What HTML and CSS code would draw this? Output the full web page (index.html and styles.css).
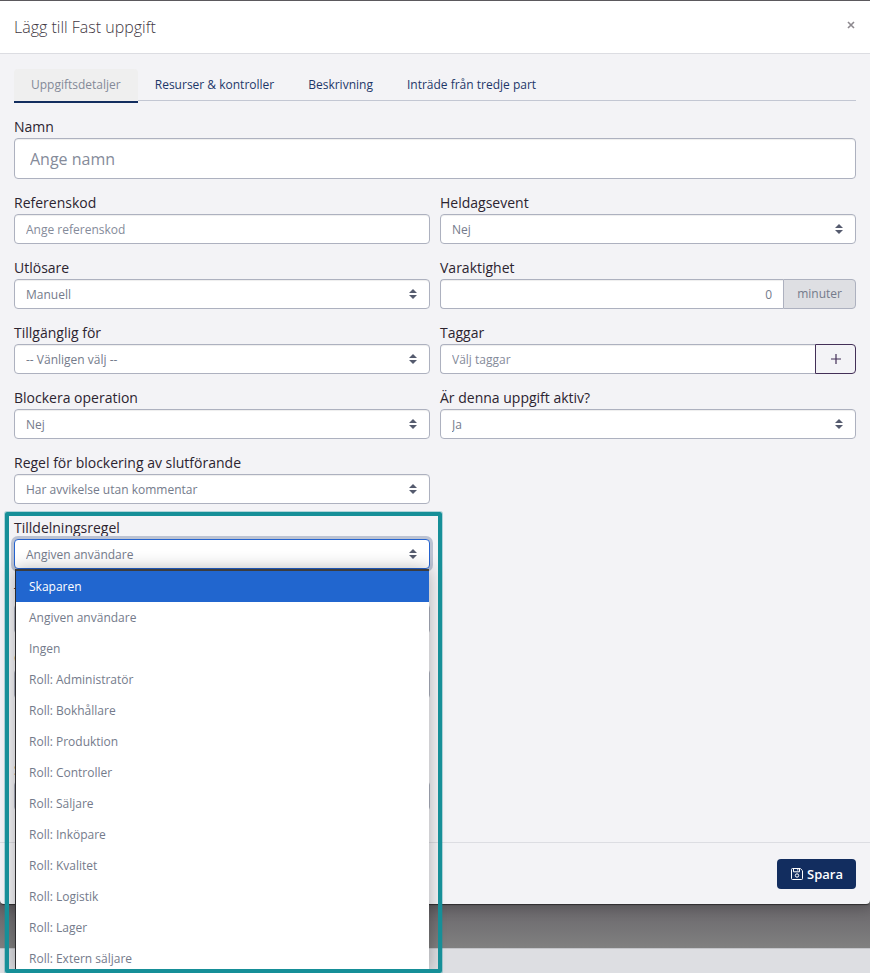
FILE: index.html
```html
<!DOCTYPE html>
<html lang="sv">
<head>
  <meta charset="UTF-8" />
  <meta name="viewport" content="width=device-width, initial-scale=1" />
  <title>Lägg till Fast uppgift</title>
  <link rel="stylesheet" href="styles.css">
</head>
<body>
  <form class="modal">
    <header class="modal-header">
      <h1>Lägg till Fast uppgift</h1>
      <button type="button" class="close" aria-label="Stäng">
        <svg width="8" height="8" viewBox="0 0 8 8"><path d="M1 1l6 6M7 1L1 7" stroke="currentColor" stroke-width="1.6"/></svg>
      </button>
    </header>

    <div class="modal-body">
      <nav class="tabs">
        <a class="tab active" href="#detaljer">Uppgiftsdetaljer</a>
        <a class="tab" href="#resurser">Resurser &amp; kontroller</a>
        <a class="tab" href="#beskrivning">Beskrivning</a>
        <a class="tab" href="#tredjepart">Inträde från tredje part</a>
      </nav>

      <div class="form-grid">
        <div class="field wide">
          <label for="namn">Namn</label>
          <input class="control large" type="text" id="namn" placeholder="Ange namn" />
        </div>

        <div class="field">
          <label for="referenskod">Referenskod</label>
          <input class="control" type="text" id="referenskod" placeholder="Ange referenskod" />
        </div>
        <div class="field">
          <label for="heldag">Heldagsevent</label>
          <select class="control" id="heldag"><option>Nej</option></select>
        </div>

        <div class="field">
          <label for="utlosare">Utlösare</label>
          <select class="control" id="utlosare"><option>Manuell</option></select>
        </div>
        <div class="field">
          <label for="varaktighet">Varaktighet</label>
          <div class="group">
            <input class="control number" type="text" id="varaktighet" value="0" />
            <span class="addon">minuter</span>
          </div>
        </div>

        <div class="field">
          <label for="tillganglig">Tillgänglig för</label>
          <select class="control" id="tillganglig"><option>-- Vänligen välj --</option></select>
        </div>
        <div class="field">
          <label for="taggar">Taggar</label>
          <div class="group">
            <input class="control" type="text" id="taggar" placeholder="Välj taggar" />
            <button type="button" class="btn-add" aria-label="Lägg till tagg">
              <svg width="10" height="10" viewBox="0 0 10 10"><path d="M5 0v10M0 5h10" stroke="currentColor" stroke-width="1.2"/></svg>
            </button>
          </div>
        </div>

        <div class="field">
          <label for="blockera">Blockera operation</label>
          <select class="control" id="blockera"><option>Nej</option></select>
        </div>
        <div class="field">
          <label for="aktiv">Är denna uppgift aktiv?</label>
          <select class="control" id="aktiv"><option>Ja</option></select>
        </div>

        <div class="field left">
          <label for="slutforande">Regel för blockering av slutförande</label>
          <select class="control" id="slutforande"><option>Har avvikelse utan kommentar</option></select>
        </div>

        <div class="field left open">
          <label for="tilldelning">Tilldelningsregel</label>
          <select class="control focused" id="tilldelning"><option>Angiven användare</option></select>
          <ul class="options" role="listbox" aria-label="Tilldelningsregel">
            <li class="selected" role="option" aria-selected="true">Skaparen</li>
            <li role="option">Angiven användare</li>
            <li role="option">Ingen</li>
            <li role="option">Roll: Administratör</li>
            <li role="option">Roll: Bokhållare</li>
            <li role="option">Roll: Produktion</li>
            <li role="option">Roll: Controller</li>
            <li role="option">Roll: Säljare</li>
            <li role="option">Roll: Inköpare</li>
            <li role="option">Roll: Kvalitet</li>
            <li role="option">Roll: Logistik</li>
            <li role="option">Roll: Lager</li>
            <li role="option">Roll: Extern säljare</li>
          </ul>
          <div class="highlight"></div>
        </div>

        <!-- fields under the open list -->
        <div class="field left">
          <label for="till">T</label>
          <select class="control" id="till"></select>
        </div>
        <div class="field left with-help">
          <label for="grupp">G</label>
          <select class="control" id="grupp"></select>
        </div>
        <div class="field left">
          <label for="status">S</label>
          <select class="control" id="status"></select>
        </div>
      </div>
    </div>

    <footer class="modal-footer">
      <button type="submit" class="btn-save">
        <svg width="12" height="12" viewBox="0 0 12 12" fill="none" stroke="currentColor">
          <path d="M1.5 .5h7.8l2.2 2.2v7.8a1 1 0 0 1-1 1h-9a1 1 0 0 1-1-1v-9a1 1 0 0 1 1-1z"/>
          <path d="M2.5 .5v3.3h6V.5M6.8 1v1.6"/>
          <circle cx="6" cy="7.5" r="1.7"/>
        </svg>
        Spara
      </button>
    </footer>
  </form>

  <div class="backdrop"></div>
  <div class="page-footer"></div>
</body>
</html>
```
FILE: styles.css
```css
* {
  box-sizing: border-box;
}

body {
  margin: 0;
  min-height: 100vh;
  display: flex;
  flex-direction: column;
  overflow: hidden;
  border-top: 1px solid #5b595d;
  background-color: #808080;
  color: #2c2430;
  font-family: "Open Sans", sans-serif;
  font-size: 14px;
}

input, select, button {
  font-family: inherit;
  font-size: 12px;
}

.modal {
  position: relative;
  background-color: #f3f3f6;
  border-radius: 0 0 4px 4px;
  box-shadow: 0 1px 1px rgba(0, 0, 0, 0.5), 0 4px 14px rgba(0, 0, 0, 0.2);
}

.modal-header {
  display: flex;
  justify-content: space-between;
  align-items: center;
  height: 53px;
  padding: 0 14px;
  background-color: #fff;
  border-bottom: 1px solid #dcdde2;
}

.modal-header h1 {
  margin: 0;
  font-size: 16px;
  font-weight: 300;
  color: #3f3843;
}

.close {
  display: flex;
  padding: 1px;
  margin-bottom: 4px;
  border: none;
  background: none;
  color: #8d898f;
  cursor: pointer;
}

.modal-body {
  padding: 15px 14px 16px;
}

.tabs {
  display: flex;
  height: 34px;
  margin-bottom: 15px;
  background: linear-gradient(#c3c7d3, #c3c7d3) 0 31px / 100% 1px no-repeat;
}

.tab {
  padding: 0 17px;
  line-height: 32px;
  font-size: 12px;
  color: #1d3769;
  text-decoration: none;
}

.tab.active {
  color: #848a98;
  background-color: #efefef;
  border-bottom: 2px solid #122d5f;
  border-radius: 4px 4px 0 0;
}

.form-grid {
  display: grid;
  grid-template-columns: 1fr 1fr;
  gap: 15px 10px;
  padding-bottom: 15px;
}

.field {
  display: flex;
  flex-direction: column;
}

.field label {
  line-height: 20px;
  height: 20px;
  margin-top: -1px;
  margin-bottom: 1px;
}

.wide {
  grid-column: 1 / 3;
}

.left {
  grid-column: 1;
}

.with-help {
  padding-bottom: 47px;
}

.control {
  width: 100%;
  height: 30px;
  padding: 0 11px;
  border: 1px solid #adb1bf;
  border-radius: 4px;
  background-color: #fff;
  box-shadow: inset 0 1px 1px rgba(0, 0, 0, 0.07);
  color: #747b8b;
}

.control::placeholder {
  color: #858b9a;
}

.control.large {
  height: 41px;
  padding: 0 15px;
  font-size: 16px;
}

select.control {
  appearance: none;
  background-image: url("data:image/svg+xml,%3Csvg xmlns='http://www.w3.org/2000/svg' viewBox='0 0 4 5'%3E%3Cpath fill='%23555b6e' d='M2 0L0 2h4zm0 5L0 3h4z'/%3E%3C/svg%3E");
  background-repeat: no-repeat;
  background-position: right 12px center;
  background-size: 8px 10px;
}

.control.focused {
  border-color: #2563cf;
  box-shadow: 0 0 0 3px #bbc2d2;
}

.group {
  display: flex;
}

.group .control {
  flex: 1;
  width: auto;
  min-width: 0;
  border-right: none;
  border-radius: 4px 0 0 4px;
}

.number {
  text-align: right;
}

.addon {
  padding: 0 13px;
  border: 1px solid #adb1bf;
  border-radius: 0 4px 4px 0;
  background-color: #dedfe3;
  color: #747b8b;
  font-size: 12px;
  line-height: 28px;
}

.btn-add {
  display: flex;
  align-items: center;
  justify-content: center;
  width: 41px;
  border: 1px solid #432f57;
  border-radius: 0 4px 4px 0;
  background: none;
  color: #432f57;
  cursor: pointer;
}

.open {
  position: relative;
  z-index: 2;
}

.options {
  position: absolute;
  top: 100%;
  left: 1px;
  right: 1px;
  height: 402px;
  margin: 0;
  padding: 0;
  overflow: hidden;
  list-style: none;
  background-color: #fff;
  border-top: 2px solid #3c3c3e;
  border-left: 1px solid #2b2b2e;
  box-shadow: 0 0 16px rgba(0, 0, 0, 0.3);
}

.options li {
  padding: 0 13px;
  line-height: 31px;
  font-size: 12px;
  color: #747b8b;
}

.options li.selected {
  background-color: #2166cf;
  color: #fff;
}

/* teal frame around the rule and its list */
.highlight {
  position: absolute;
  top: -7px;
  left: -9px;
  right: -12px;
  height: 461px;
  border: 4px solid #168f98;
  border-radius: 2px;
  box-shadow: 0 0 0 1px rgba(22, 143, 152, 0.3);
  pointer-events: none;
}

.modal-footer {
  display: flex;
  justify-content: flex-end;
  padding: 16px 14px 15px;
  border-top: 1px solid #dcdde2;
}

.btn-save {
  display: flex;
  align-items: center;
  gap: 4px;
  height: 30px;
  padding: 0 13px 0 14px;
  border: none;
  border-radius: 4px;
  background-color: #122d5f;
  color: #fff;
  font-size: 13px;
  font-weight: 600;
  cursor: pointer;
}

.backdrop {
  height: 44px;
  background: linear-gradient(#69666a, #808080);
}

.page-footer {
  flex: 1;
  background-color: #dddee2;
  border-top: 1px solid #c4c5ca;
}
```
